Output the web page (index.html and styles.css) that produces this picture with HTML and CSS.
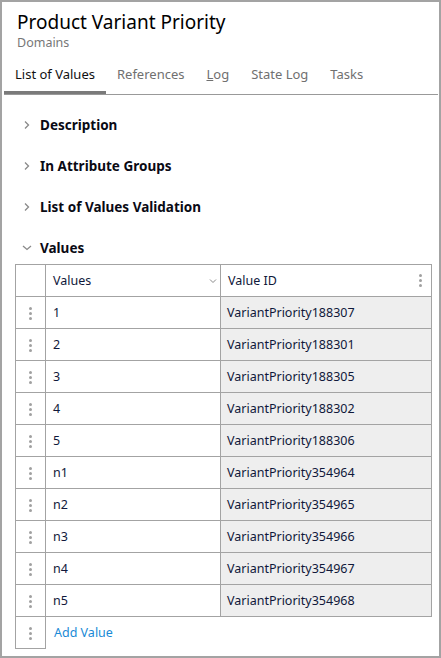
FILE: index.html
```html
<!DOCTYPE html>
<html>
<head>
<meta charset="utf-8">
<link rel="stylesheet" href="styles.css">
</head>
<body>
<div class="window">
  <div class="header">
    <div class="title">Product Variant Priority</div>
    <div class="subtitle">Domains</div>
  </div>
  <div class="tabs">
    <div class="tab active">List of Values</div>
    <div class="tab">References</div>
    <div class="tab"><u>L</u>og</div>
    <div class="tab">State Log</div>
    <div class="tab">Tasks</div>
  </div>
  <div class="sections">
    <div class="section"><svg class="chev" width="10" height="10" viewBox="0 0 10 10"><path d="M3 1.5 L6.5 5 L3 8.5" fill="none" stroke="#8a8a8a" stroke-width="1.3"/></svg><span>Description</span></div>
    <div class="section"><svg class="chev" width="10" height="10" viewBox="0 0 10 10"><path d="M3 1.5 L6.5 5 L3 8.5" fill="none" stroke="#8a8a8a" stroke-width="1.3"/></svg><span>In Attribute Groups</span></div>
    <div class="section"><svg class="chev" width="10" height="10" viewBox="0 0 10 10"><path d="M3 1.5 L6.5 5 L3 8.5" fill="none" stroke="#8a8a8a" stroke-width="1.3"/></svg><span>List of Values Validation</span></div>
    <div class="section"><svg class="chev" width="10" height="10" viewBox="0 0 10 10"><path d="M1 3 L5 6.5 L9 3" fill="none" stroke="#8a8a8a" stroke-width="1.3"/></svg><span>Values</span></div>
  </div>
  <table class="grid">
    <thead>
      <tr>
        <th class="h"></th>
        <th class="v"><div class="hcell"><span>Values</span><svg width="8" height="6" viewBox="0 0 8 6"><path d="M1 1.5 L4 4.5 L7 1.5" fill="none" stroke="#8a8a8a" stroke-width="1"/></svg></div></th>
        <th class="id"><div class="hcell"><span>Value ID</span><span class="kebab"><i></i><i></i><i></i></span></div></th>
      </tr>
    </thead>
    <tbody>
      <tr><td class="h"><span class="kebab"><i></i><i></i><i></i></span></td><td class="v">1</td><td class="id">VariantPriority188307</td></tr>
      <tr><td class="h"><span class="kebab"><i></i><i></i><i></i></span></td><td class="v">2</td><td class="id">VariantPriority188301</td></tr>
      <tr><td class="h"><span class="kebab"><i></i><i></i><i></i></span></td><td class="v">3</td><td class="id">VariantPriority188305</td></tr>
      <tr><td class="h"><span class="kebab"><i></i><i></i><i></i></span></td><td class="v">4</td><td class="id">VariantPriority188302</td></tr>
      <tr><td class="h"><span class="kebab"><i></i><i></i><i></i></span></td><td class="v">5</td><td class="id">VariantPriority188306</td></tr>
      <tr><td class="h"><span class="kebab"><i></i><i></i><i></i></span></td><td class="v">n1</td><td class="id">VariantPriority354964</td></tr>
      <tr><td class="h"><span class="kebab"><i></i><i></i><i></i></span></td><td class="v">n2</td><td class="id">VariantPriority354965</td></tr>
      <tr><td class="h"><span class="kebab"><i></i><i></i><i></i></span></td><td class="v">n3</td><td class="id">VariantPriority354966</td></tr>
      <tr><td class="h"><span class="kebab"><i></i><i></i><i></i></span></td><td class="v">n4</td><td class="id">VariantPriority354967</td></tr>
      <tr><td class="h"><span class="kebab"><i></i><i></i><i></i></span></td><td class="v">n5</td><td class="id">VariantPriority354968</td></tr>
      <tr class="add"><td class="h"><span class="kebab"><i></i><i></i><i></i></span></td><td class="v link" colspan="2">Add Value</td></tr>
    </tbody>
  </table>
</div>
</body>
</html>
```
FILE: styles.css
```css
* { box-sizing: border-box; }
html, body { margin: 0; padding: 0; background: #fff; }
body { font-family: "Noto Sans", "DejaVu Sans", sans-serif; color: #1a1a2e; }
.window {
  width: 441px; height: 658px;
  border: 2px solid #a3a3a3;
  overflow: hidden;
}
.header { padding: 8px 0 0 15px; }
.title { font-size: 19px; line-height: 24px; color: #000; }
.subtitle { font-size: 12.5px; line-height: 16px; color: #777; margin-top: 1px; }
.tabs {
  display: flex;
  margin: 12px 1px 0 2px;
  border-bottom: 1px solid #999;
}
.tab {
  padding: 1px 11px 0;
  font-size: 13px;
  line-height: 20px;
  height: 31px;
  color: #707070;
  border-bottom: 3px solid transparent;
}
.tab u { text-decoration: underline; }
.tab.active { color: #111; border-bottom-color: #7a7a7a; }
.sections { padding: 9px 0 0 20px; }
.section {
  display: flex; align-items: center;
  height: 41px;
  font-size: 13.5px; font-weight: bold; color: #0a0a14;
}
.chev { margin-right: 8px; }
.grid {
  margin: -4px 0 0 13px;
  border-collapse: collapse;
  width: 416px;
  font-size: 12.5px;
  table-layout: fixed;
}
.grid th, .grid td {
  border: 1px solid #a3a3a3;
  height: 32px;
  padding: 0 7px;
  text-align: left;
  font-weight: normal;
  color: #10183a;
}
.grid th.h, .grid td.h { width: 30px; padding: 0; text-align: center; }
.grid .v { width: 175px; }
.grid .id { width: 211px; }
.grid td.id { background: #eeeeee; padding-left: 6px; }
.grid th.id { padding-left: 7px; padding-right: 9px; }
.hcell { display: flex; align-items: center; justify-content: space-between; }
.grid th.v { padding-right: 3px; }
.kebab { display: inline-flex; flex-direction: column; gap: 2px; vertical-align: middle; }
.kebab i { display: block; width: 3px; height: 3px; border-radius: 50%; background: #a0a0a0; }
.grid tr.add td.link { border: none; color: #1a8ad6; padding-left: 8px; }
```
